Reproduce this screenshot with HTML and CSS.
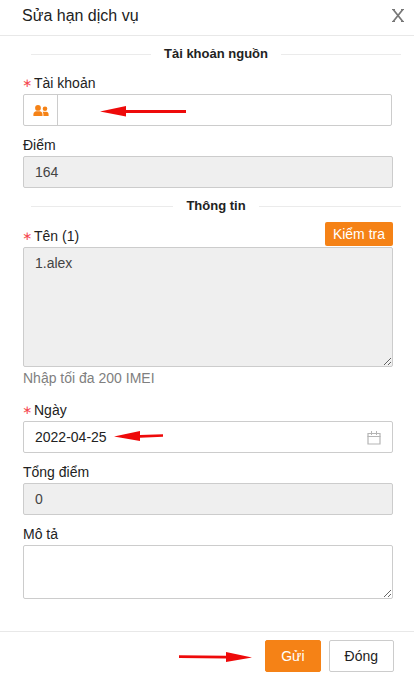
FILE: index.html
```html
<!DOCTYPE html>
<html lang="vi">
<head>
<meta charset="utf-8">
<meta name="viewport" content="width=device-width, initial-scale=1">
<title>Sửa hạn dịch vụ</title>
<link rel="stylesheet" href="styles.css">
</head>
<body>
<form class="dialog">
  <header class="dialog-header">
    <h1 class="dialog-title">Sửa hạn dịch vụ</h1>
    <button class="close" type="button" aria-label="Đóng">
      <svg width="12" height="13" viewBox="0 0 12 13" fill="none" stroke="#777"><path stroke-width="1.700" d="M1.200.5 10.800 12.500M10.800.5 1.200 12.500"/><path d="M0 .5h3M9 .5h3M0 12.500h3M9 12.500h3"/></svg>
    </button>
  </header>

  <main class="dialog-body">
    <h2 class="divider">Tài khoản nguồn</h2>
    <div class="field">
      <label class="label required" for="account">Tài khoản</label>
      <div class="control group">
        <span class="addon">
          <svg width="16" height="14" viewBox="0 0 16 14" fill="#f58216"><circle cx="5" cy="4.900" r="2.900"/><path d="M.4 13v-1.600C.4 9.400 1.800 8.500 3.300 8.300h3.400c1.700.2 2.800 1.300 2.800 3.100V13z"/><circle cx="12" cy="5.700" r="2.300"/><path d="M10.400 13v-1.700c0-1-.3-1.800-.8-2.500h3.600c1.600.1 2.400 1.200 2.400 2.600V13z"/></svg>
        </span>
        <input class="group-input" id="account" type="text">
        <svg class="arrow arrow-account" width="88" height="12" viewBox="0 0 88 12"><path fill="#ee0a0a" d="M0 6.500 26 1v4h60v3H26v3.500z"/></svg>
      </div>
    </div>
    <div class="field">
      <label class="label" for="points">Điểm</label>
      <input class="input" id="points" type="text" value="164" disabled>
    </div>

    <h2 class="divider">Thông tin</h2>
    <div class="field field-names">
      <div class="label-row">
        <label class="label required" for="names">Tên (1)</label>
        <button class="check" type="button">Kiểm tra</button>
      </div>
      <textarea class="input names" id="names" disabled>1.alex</textarea>
      <p class="help">Nhập tối đa 200 IMEI</p>
    </div>
    <div class="field">
      <label class="label required" for="date">Ngày</label>
      <div class="control">
        <input class="input" id="date" type="text" value="2022-04-25">
        <svg class="calendar" width="14" height="14" viewBox="0 0 14 14" fill="none" stroke="#b5b5b5"><path d="M1 2.500h12v10.500H1z" stroke-width="1.200"/><path d="M.5 5.500h13M4.500 0v4M9.500 0v4"/></svg>
        <svg class="arrow arrow-date" width="50" height="12" viewBox="0 0 50 12"><path fill="#ee0a0a" d="M0 6.500 26 1v4l23-.8v2.600l-23 1V11z"/></svg>
      </div>
    </div>
    <div class="field">
      <label class="label" for="total">Tổng điểm</label>
      <input class="input" id="total" type="text" value="0" disabled>
    </div>
    <div class="field">
      <label class="label" for="note">Mô tả</label>
      <textarea class="input note" id="note"></textarea>
    </div>
  </main>

  <footer class="dialog-footer">
    <svg width="74" height="12" viewBox="0 0 74 12"><path fill="#ee0a0a" d="M0 5.200l47 .5V2l26 5.500-26 4.500V8.500L0 8z"/></svg>
    <button class="button primary" type="submit">Gửi</button>
    <button class="button" type="button">Đóng</button>
  </footer>
</form>
</body>
</html>
```

FILE: styles.css
```css
* {
  box-sizing: border-box;
}

body {
  margin: 0;
  background: #fff;
  color: #222;
  font: 14px/22px "Liberation Sans", Arial, sans-serif;
}

input,
textarea,
button {
  font: inherit;
  color: inherit;
}

.dialog-header {
  display: flex;
  align-items: center;
  justify-content: space-between;
  height: 36px;
  padding: 0 10px 4px 22px;
  border-bottom: 1px solid #e8e8e8;
}

.dialog-title {
  margin: 0;
  font-size: 16px;
  font-weight: 400;
}

.close {
  display: flex;
  padding: 0;
  border: 0;
  background: none;
}

.dialog-body {
  padding: 8px 21px 32px 23px;
}

.divider {
  display: flex;
  align-items: center;
  gap: 13px;
  margin: 0 -8px 8px 8px;
  font-size: 13px;
  line-height: 20px;
}

.divider::before,
.divider::after {
  content: "";
  flex: 1;
  height: 1px;
  background: #ebebeb;
}

.field {
  display: flex;
  flex-direction: column;
  margin-bottom: 8px;
}

.field:last-child {
  margin-bottom: 0;
}

.field-names {
  margin-bottom: 10px;
}

.label {
  display: flex;
  align-items: center;
}

.label-row {
  display: flex;
  align-items: flex-end;
  justify-content: space-between;
  height: 23px;
}

.required::before {
  content: "∗";
  width: 11px;
  margin-left: -1px;
  margin-right: 1px;
  color: #f5474f;
  font-family: "DejaVu Sans", sans-serif;
  font-size: 12px;
  line-height: 1;
}

.check {
  height: 24px;
  margin-bottom: 1px;
  padding: 0 8px;
  border: 0;
  border-radius: 2px;
  background: #f58216;
  color: #fff;
}

.control {
  position: relative;
  display: flex;
}

.input {
  display: block;
  width: 100%;
  height: 32px;
  margin: 0;
  padding: 4px 11px;
  border: 1px solid #ccc;
  border-radius: 2px;
  background: #fff;
}

.input:disabled {
  background: #efefef;
  color: #444;
}

.group {
  height: 32px;
  margin-right: 1px;
  border: 1px solid #ccc;
  border-radius: 2px;
}

.addon {
  display: flex;
  align-items: center;
  justify-content: center;
  width: 34px;
  border-right: 1px solid #ccc;
}

.group-input {
  flex: 1;
  min-width: 0;
  padding: 0 11px;
  border: 0;
  background: none;
}

.names {
  height: 120px;
}

.note {
  height: 54px;
}

.help {
  margin: 0;
  color: #808080;
}

.calendar {
  position: absolute;
  top: 10px;
  right: 12px;
}

.arrow {
  position: absolute;
}

.arrow-account {
  top: 10px;
  left: 76px;
}

.arrow-date {
  top: 9px;
  left: 91px;
}

.dialog-footer {
  display: flex;
  align-items: center;
  justify-content: flex-end;
  gap: 8px;
  padding: 8px 20px 2px;
  border-top: 1px solid #e8e8e8;
}

.dialog-footer svg {
  margin-right: 4px;
}

.button {
  height: 32px;
  padding: 0 15px;
  border: 1px solid #ccc;
  border-radius: 2px;
  background: #fff;
}

.primary {
  border-color: #f58216;
  background: #f58216;
  color: #fff;
}
```
